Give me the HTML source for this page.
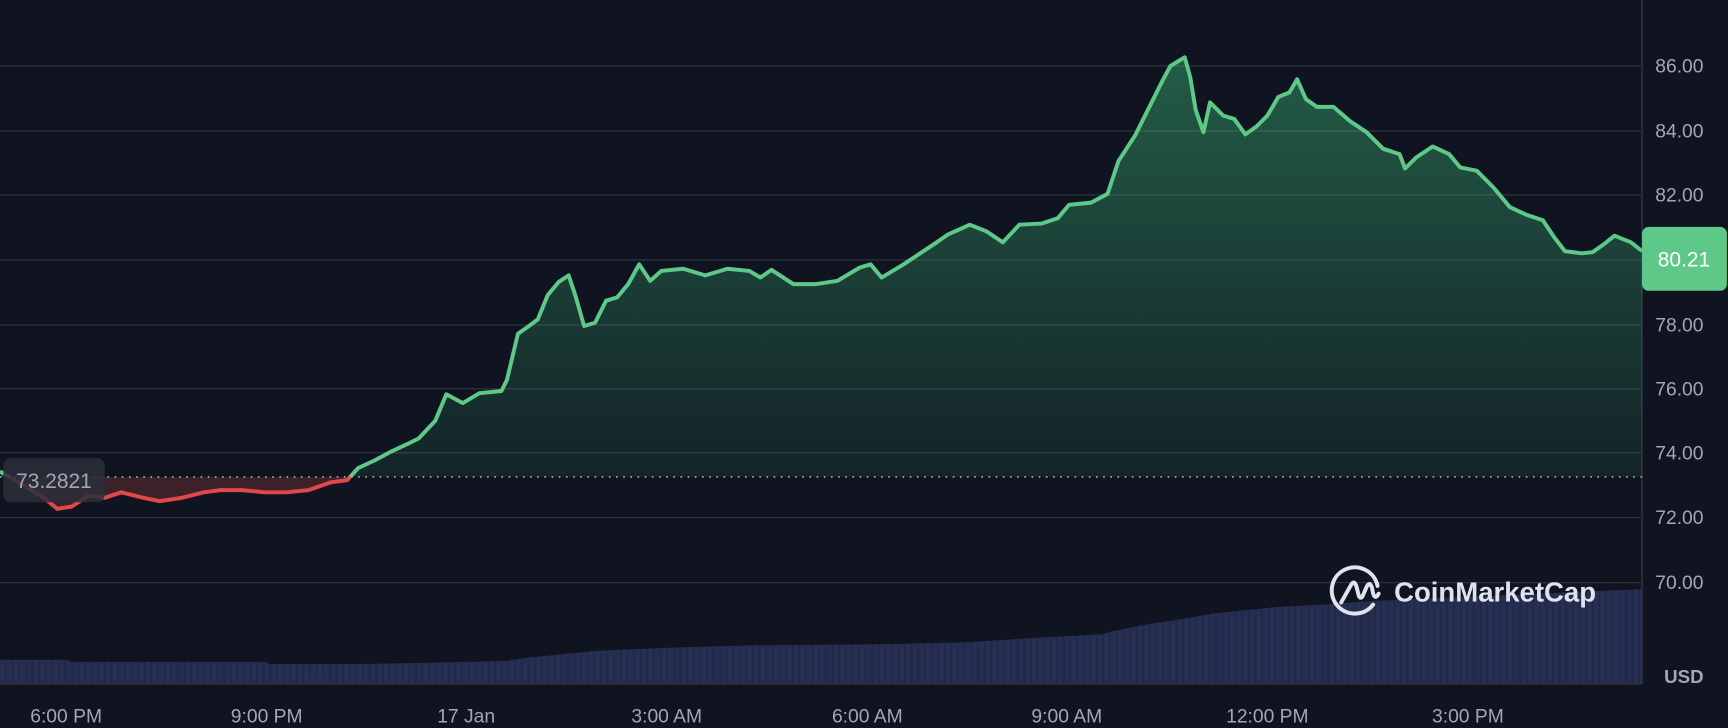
<!DOCTYPE html>
<html><head><meta charset="utf-8"><style>
html,body{margin:0;padding:0;background:#0f1420;overflow:hidden}
svg{display:block}
text{font-family:"Liberation Sans",sans-serif}
</style></head><body>
<svg width="1728" height="728" viewBox="0 0 1568 661" preserveAspectRatio="none">
<defs>
<linearGradient id="g" gradientUnits="userSpaceOnUse" x1="0" y1="50" x2="0" y2="620">
<stop offset="0" stop-color="#3fbf7a" stop-opacity="0.42"/>
<stop offset="0.6" stop-color="#3fbf7a" stop-opacity="0.12"/>
<stop offset="1" stop-color="#3fbf7a" stop-opacity="0.02"/>
</linearGradient>
<clipPath id="above"><rect x="0" y="0" width="1490" height="433"/></clipPath>
<clipPath id="below"><rect x="0" y="433" width="1490" height="300"/></clipPath>
<pattern id="bars" width="6" height="700" patternUnits="userSpaceOnUse">
<rect x="0" y="0" width="5" height="700" fill="#262f52"/>
<rect x="5" y="0" width="1" height="700" fill="#1f2744"/>
</pattern>
</defs>
<rect width="1568" height="661" fill="#0f1420"/>
<g stroke="#2b303c" stroke-width="1.2">
<line x1="0" y1="60" x2="1490" y2="60"/>
<line x1="0" y1="119" x2="1490" y2="119"/>
<line x1="0" y1="177" x2="1490" y2="177"/>
<line x1="0" y1="236" x2="1490" y2="236"/>
<line x1="0" y1="295" x2="1490" y2="295"/>
<line x1="0" y1="353" x2="1490" y2="353"/>
<line x1="0" y1="411" x2="1490" y2="411"/>
<line x1="0" y1="470" x2="1490" y2="470"/>
<line x1="0" y1="529" x2="1490" y2="529"/>
</g>
<polygon fill="url(#bars)" points="0,599 60,599 65,601 240,601 245,603 320,603 380,602 460,600 480,597 520,593 540,591 610,588 680,586 800,585 880,583 940,579 1000,576 1010,573 1040,567 1080,561 1100,557 1160,551 1200,549 1240,546 1300,543 1380,540 1440,537 1490,535 1490,621 0,621"/>
<line x1="0" y1="621" x2="1490" y2="621" stroke="#2b303c" stroke-width="1.5"/>
<line x1="1490" y1="0" x2="1490" y2="621" stroke="#2b303c" stroke-width="1.5"/>
<polygon clip-path="url(#above)" fill="url(#g)" points="0,428 20,440 40,452 52,462 65,460 80,450 95,452 110,447 130,452 145,455 165,452 185,447 200,445 220,445 240,447 260,447 280,445 300,438 315,436 325,425 340,418 355,410 370,403 380,398 395,382 405,358 420,366 435,357 455,355 460,345 470,303 480,296 488,290 497,268 507,256 516,250 522,268 530,296 540,293 550,273 560,270 570,258 580,240 590,255 600,246 620,244 640,250 660,244 680,246 690,252 700,245 720,258 740,258 760,255 780,243 790,240 800,252 820,240 835,230 850,220 860,213 880,204 895,210 910,220 925,204 945,203 960,198 970,186 990,184 1005,176 1015,146 1030,123 1045,93 1055,73 1062,60 1070,55 1075,52 1080,70 1085,100 1092,120 1098,93 1110,105 1120,108 1130,122 1140,115 1150,105 1160,88 1170,84 1177,72 1185,90 1195,97 1210,97 1225,110 1240,120 1255,135 1270,140 1275,153 1285,143 1300,133 1315,140 1325,152 1340,155 1355,170 1370,188 1385,195 1400,200 1410,215 1420,228 1435,230 1445,229 1455,222 1465,214 1480,220 1490,228 1490,621 0,621"/>
<polygon clip-path="url(#below)" fill="#5a2a30" fill-opacity="0.6" points="0,428 20,440 40,452 52,462 65,460 80,450 95,452 110,447 130,452 145,455 165,452 185,447 200,445 220,445 240,447 260,447 280,445 300,438 315,436 325,425 325,433 0,433"/>
<polyline clip-path="url(#above)" fill="none" stroke="#5dc887" stroke-width="3.6" stroke-linejoin="round" points="0,428 20,440 40,452 52,462 65,460 80,450 95,452 110,447 130,452 145,455 165,452 185,447 200,445 220,445 240,447 260,447 280,445 300,438 315,436 325,425 340,418 355,410 370,403 380,398 395,382 405,358 420,366 435,357 455,355 460,345 470,303 480,296 488,290 497,268 507,256 516,250 522,268 530,296 540,293 550,273 560,270 570,258 580,240 590,255 600,246 620,244 640,250 660,244 680,246 690,252 700,245 720,258 740,258 760,255 780,243 790,240 800,252 820,240 835,230 850,220 860,213 880,204 895,210 910,220 925,204 945,203 960,198 970,186 990,184 1005,176 1015,146 1030,123 1045,93 1055,73 1062,60 1070,55 1075,52 1080,70 1085,100 1092,120 1098,93 1110,105 1120,108 1130,122 1140,115 1150,105 1160,88 1170,84 1177,72 1185,90 1195,97 1210,97 1225,110 1240,120 1255,135 1270,140 1275,153 1285,143 1300,133 1315,140 1325,152 1340,155 1355,170 1370,188 1385,195 1400,200 1410,215 1420,228 1435,230 1445,229 1455,222 1465,214 1480,220 1490,228"/>
<polyline clip-path="url(#below)" fill="none" stroke="#e0484a" stroke-width="3.6" stroke-linejoin="round" points="0,428 20,440 40,452 52,462 65,460 80,450 95,452 110,447 130,452 145,455 165,452 185,447 200,445 220,445 240,447 260,447 280,445 300,438 315,436 325,425 340,418"/>
<line x1="0" y1="433" x2="1490" y2="433" stroke="#a7adbd" stroke-width="1.5" stroke-dasharray="1.5 5"/>
<rect x="3" y="416" width="92" height="40" rx="7" fill="#2a2e3a" fill-opacity="0.85"/>
<text x="49" y="443" text-anchor="middle" font-size="19" fill="#a1a7b7">73.2821</text>
<g font-size="17.5" fill="#a1a7b7">
<text x="1502" y="66">86.00</text>
<text x="1502" y="125">84.00</text>
<text x="1502" y="183">82.00</text>
<text x="1502" y="301">78.00</text>
<text x="1502" y="359">76.00</text>
<text x="1502" y="417">74.00</text>
<text x="1502" y="476">72.00</text>
<text x="1502" y="535">70.00</text>
<text x="1510" y="620" font-weight="bold" font-size="17">USD</text>
<text x="60" y="656" text-anchor="middle">6:00 PM</text>
<text x="242" y="656" text-anchor="middle">9:00 PM</text>
<text x="423" y="656" text-anchor="middle">17 Jan</text>
<text x="605" y="656" text-anchor="middle">3:00 AM</text>
<text x="787" y="656" text-anchor="middle">6:00 AM</text>
<text x="968" y="656" text-anchor="middle">9:00 AM</text>
<text x="1150" y="656" text-anchor="middle">12:00 PM</text>
<text x="1332" y="656" text-anchor="middle">3:00 PM</text>
</g>
<rect x="1490" y="206" width="77" height="58" rx="6" fill="#5dc887"/>
<text x="1528" y="242" text-anchor="middle" font-size="19" fill="#ffffff">80.21</text>
<g fill="none" stroke="#dfe3ee" stroke-width="3.6" stroke-linecap="round" stroke-linejoin="round">
<path d="M1246,549 A21,21 0 1 1 1250,532"/>
<path d="M1217,547 L1226,531 Q1229,526 1231,533 L1233,541 Q1235,545 1237,540 L1240,533 Q1243,527 1245,534 L1246,539 Q1248,545 1251,539"/>
</g>
<text x="1265" y="546" font-size="25" font-weight="bold" fill="#dfe3ee">CoinMarketCap</text>
</svg>
</body></html>
